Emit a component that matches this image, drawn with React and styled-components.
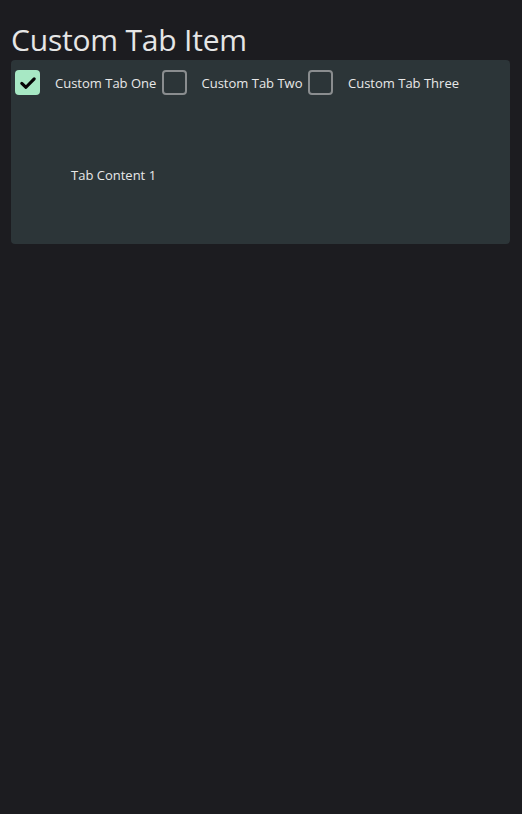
import React, { useState } from "react";
import styled, { createGlobalStyle } from "styled-components";

const GlobalStyle = createGlobalStyle`
  html, body {
    margin: 0;
    padding: 0;
    background: #1c1c20;
  }
  body {
    font-family: "Open Sans", "Noto Sans", sans-serif;
    min-height: 814px;
  }
`;

const Page = styled.div`
  padding: 20px 12px 0 11px;
`;

const Title = styled.h1`
  margin: 0;
  font-size: 30px;
  font-weight: 400;
  color: #e6e6e6;
  line-height: 40px;
  letter-spacing: -0.2px;
`;

const Panel = styled.div`
  background: #2c3538;
  border-radius: 4px;
  height: 184px;
  display: flex;
  flex-direction: column;
`;

const TabBar = styled.div`
  display: flex;
  align-items: center;
  padding: 10px 0 0 4px;
`;

const TabItem = styled.label`
  display: flex;
  align-items: center;
  gap: 15px;
  width: 146.5px;
  flex: none;
  white-space: nowrap;
  cursor: pointer;
  color: #e8e8e8;
  font-size: 13px;
`;

const Box = styled.span`
  box-sizing: border-box;
  width: 25px;
  height: 25px;
  border-radius: 4px;
  flex: none;
  display: flex;
  align-items: center;
  justify-content: center;
  background: ${(p) => (p.checked ? "#a7e8c4" : "transparent")};
  border: ${(p) => (p.checked ? "none" : "2px solid #8a8d8f")};
`;

const Content = styled.div`
  padding: 71px 0 0 60px;
  color: #e8e8e8;
  font-size: 13px;
`;

const tabs = ["Custom Tab One", "Custom Tab Two", "Custom Tab Three"];

export default function App() {
  const [active, setActive] = useState(0);

  return (
    <Page>
      <GlobalStyle />
      <Title>Custom Tab Item</Title>
      <Panel>
        <TabBar>
          {tabs.map((t, i) => (
            <TabItem key={t} onClick={() => setActive(i)}>
              <Box checked={active === i}>
                {active === i && (
                  <svg width="18" height="18" viewBox="0 0 16 16">
                    <path
                      d="M2.5 8.3 L6.2 11.8 L13.5 4.3"
                      fill="none"
                      stroke="#050505"
                      strokeWidth="2.8"
                      strokeLinecap="round"
                      strokeLinejoin="round"
                    />
                  </svg>
                )}
              </Box>
              {t}
            </TabItem>
          ))}
        </TabBar>
        <Content>Tab Content {active + 1}</Content>
      </Panel>
    </Page>
  );
}
